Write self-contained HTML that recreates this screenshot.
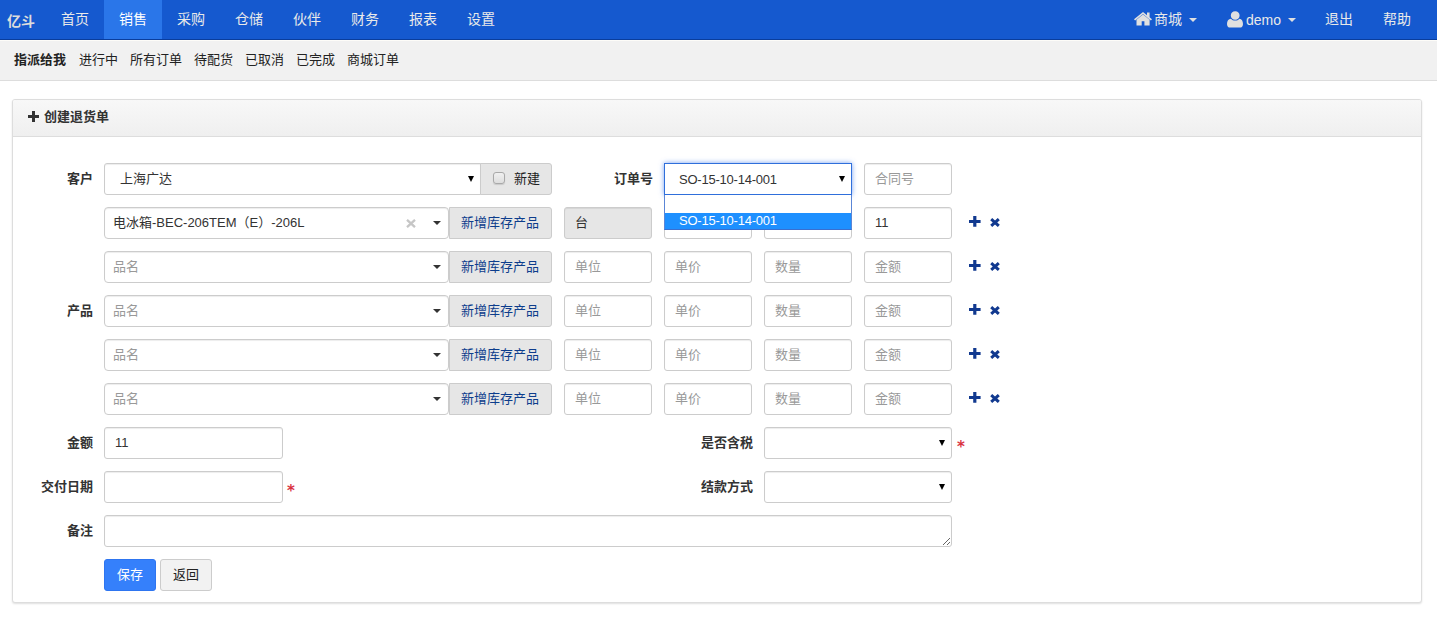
<!DOCTYPE html><html lang="zh"><head><meta charset="utf-8"><title>创建退货单</title><style>
*{box-sizing:border-box;margin:0;padding:0}
html,body{width:1437px;height:628px;overflow:hidden;background:#fff}
body{font-family:"Liberation Sans","Noto Sans CJK SC",sans-serif;font-size:13px;color:#333;position:relative;line-height:20px}
.abs{position:absolute}
.nav{position:absolute;left:0;top:0;width:1437px;height:40px;background:#1559cf;border-bottom:1px solid #0a3d9c}
.nav a{position:absolute;top:0;height:39px;line-height:38px;color:#e9e9e9;font-size:14px;text-align:center;text-decoration:none;white-space:nowrap}
.nav a.act{background:#2a76e9;color:#fff}
.brand{position:absolute;left:7px;top:0;line-height:42px;font-size:14px;font-weight:bold;color:#dcdcdc}
.caret{display:inline-block;width:0;height:0;border-top:4px solid #e0e0e0;border-left:4px solid transparent;border-right:4px solid transparent;vertical-align:middle;margin-left:4px}
.sub{position:absolute;left:0;top:40px;width:1437px;height:41px;background:#f1f1f1;border-top:1px solid #fdfcf8;border-bottom:1px solid #ddd}
.sub span{position:absolute;top:9px;line-height:20px;font-size:13px;color:#222;white-space:nowrap}
.panel{position:absolute;left:12px;top:99px;width:1410px;height:504px;border:1px solid #ddd;border-radius:3px;box-shadow:0 1px 2px rgba(0,0,0,.13);background:#fff}
.phead{position:absolute;left:0;top:0;width:100%;height:37px;background:linear-gradient(#f8f8f8,#efefef);border-bottom:1px solid #ddd;border-radius:2px 2px 0 0}
.ptitle{position:absolute;left:44px;top:107px;font-weight:bold;font-size:13px;line-height:20px;color:#333}
.lbl{position:absolute;margin:1px 0 0 1px;font-weight:bold;font-size:13px;line-height:20px;text-align:right;color:#333;white-space:nowrap}
.inp{position:absolute;height:32px;border:1px solid #ccc;border-radius:3px;background:#fff;box-shadow:inset 0 1px 1px rgba(0,0,0,.075);font-size:13px;line-height:30px;padding-left:10px;color:#333;white-space:nowrap;overflow:hidden}
.ph{color:#999}
.dis{background:#e6e6e6}
.addon{position:absolute;height:32px;border:1px solid #ccc;border-radius:0 3px 3px 0;background:#e6e6e6;font-size:13px;line-height:30px;text-align:center;color:#0d3d8c;white-space:nowrap}
.noR{border-radius:3px 0 0 3px}
.arr{position:absolute;width:0;height:0;border-top:6px solid #000;border-left:3px solid transparent;border-right:3px solid transparent}
.car2{position:absolute;width:0;height:0;border-top:4px solid #333;border-left:4px solid transparent;border-right:4px solid transparent}
.ico{position:absolute}
.star{position:absolute;color:#d9333f;font-family:'DejaVu Sans',sans-serif;font-weight:bold;font-size:15px;line-height:20px}
.btn{position:absolute;height:32px;border-radius:3px;font-size:13px;line-height:30px;text-align:center}
</style></head><body>
<div class="nav">
<span class="brand">亿斗</span>
<a class="" style="left:46px;width:58px">首页</a>
<a class="act" style="left:104px;width:58px">销售</a>
<a class="" style="left:162px;width:58px">采购</a>
<a class="" style="left:220px;width:58px">仓储</a>
<a class="" style="left:278px;width:58px">伙伴</a>
<a class="" style="left:336px;width:58px">财务</a>
<a class="" style="left:394px;width:58px">报表</a>
<a class="" style="left:452px;width:58px">设置</a>
<svg class="ico" style="left:1134px;top:12px" width="18" height="14.3" viewBox="0 0 18 15" preserveAspectRatio="none"><path fill="#e0e0e0" d="M9 0 L0 7.6 L1.1 8.9 L9 2.2 L16.9 8.9 L18 7.6 L15.6 5.6 V0.4 H13 V3.4 Z M9 2.7 L2.5 8.2 V14.2 H7.7 V9.8 H10.4 V14.2 H15.6 V8.2 Z"/></svg>
<a style="left:1154px;width:44px;text-align:left">商城<span class="caret" style="margin-left:7px"></span></a>
<svg class="ico" style="left:1227px;top:10.6px" width="16" height="17.2" viewBox="0 0 16 18" preserveAspectRatio="none"><path fill="#e0e0e0" d="M8.2 0.2 C5.6 0.2 3.8 2.2 3.8 4.7 C3.8 7.2 5.6 9.2 8.2 9.2 C10.8 9.2 12.6 7.2 12.6 4.7 C12.6 2.2 10.8 0.2 8.2 0.2 Z M3.9 8 C1.4 8.3 0 10.3 0 13.6 C0 16 1.3 17.4 3.2 17.4 H12.8 C14.7 17.4 16 16 16 13.6 C16 10.3 14.6 8.3 12.5 8 C11.4 9.3 9.9 10 8.2 10 C6.5 10 5 9.3 3.9 8 Z"/></svg>
<a style="left:1246px;width:52px;text-align:left"><span style="position:relative;top:1px">demo</span><span class="caret" style="margin-left:7px"></span></a>
<a style="left:1310px;width:58px">退出</a>
<a style="left:1368px;width:58px">帮助</a>
</div>
<div class="sub">
<span style="left:14px;font-weight:bold;">指派给我</span>
<span style="left:79px;">进行中</span>
<span style="left:130px;">所有订单</span>
<span style="left:194px;">待配货</span>
<span style="left:245px;">已取消</span>
<span style="left:296px;">已完成</span>
<span style="left:347px;">商城订单</span>
</div>
<div class="panel"><div class="phead"></div></div>
<svg class="ico" style="left:28px;top:111px" width="11" height="11" viewBox="0 0 11 11"><path fill="#333" d="M4 0H7V4H11V7H7V11H4V7H0V4H4Z"/></svg>
<div class="ptitle">创建退货单</div>
<div class="lbl" style="left:32px;width:60px;top:168px">客户</div>
<div class="inp noR" style="left:104px;top:163px;width:377px;padding-left:15px">上海广达</div>
<div class="arr" style="left:468px;top:176px"></div>
<div class="addon" style="left:480px;top:163px;width:72px;color:#222"><span class="abs" style="left:12px;top:8px;width:12px;height:12px;border:1px solid #a9a9a9;border-radius:3px;background:linear-gradient(#f0f0f0,#dedede);box-shadow:0 1px 1px rgba(0,0,0,.12)"></span><span class="abs" style="left:33px;top:0">新建</span></div>
<div class="lbl" style="left:592px;width:60px;top:168px">订单号</div>
<div class="inp" style="left:104px;top:207px;width:345px;padding-left:8px;border-radius:4px">电冰箱-BEC-206TEM（E）-206L</div>
<svg class="ico" style="left:406px;top:219px" width="10" height="9" viewBox="0 0 10 9"><path stroke="#c6c6c6" stroke-width="2.3" d="M1 0.8L9 8.2M9 0.8L1 8.2"/></svg>
<div class="car2" style="left:433px;top:221px"></div>
<div class="addon" style="left:449px;top:207px;width:103px;text-indent:-1px">新增库存产品</div>
<div class="inp dis" style="left:564px;top:207px;width:88px">台</div>
<div class="inp" style="left:664px;top:207px;width:88px"></div>
<div class="inp" style="left:764px;top:207px;width:88px"></div>
<div class="inp" style="left:864px;top:207px;width:88px">11</div>
<svg class="ico" style="left:969px;top:216px" width="12" height="11" viewBox="0 0 12 11"><path fill="#11398f" d="M4.2 0H7.4V3.9H11.6V6.9H7.4V10.8H4.2V6.9H0V3.9H4.2Z"/></svg>
<svg class="ico" style="left:990px;top:218px" width="10" height="9" viewBox="0 0 10 9"><path stroke="#11398f" stroke-width="3" d="M1.2 1.1L8.8 7.9M8.8 1.1L1.2 7.9"/></svg>
<div class="inp ph" style="left:104px;top:251px;width:345px;padding-left:8px;border-radius:4px">品名</div>
<div class="car2" style="left:433px;top:265px"></div>
<div class="addon" style="left:449px;top:251px;width:103px;text-indent:-1px">新增库存产品</div>
<div class="inp ph" style="left:564px;top:251px;width:88px">单位</div>
<div class="inp ph" style="left:664px;top:251px;width:88px">单价</div>
<div class="inp ph" style="left:764px;top:251px;width:88px">数量</div>
<div class="inp ph" style="left:864px;top:251px;width:88px">金额</div>
<svg class="ico" style="left:969px;top:260px" width="12" height="11" viewBox="0 0 12 11"><path fill="#11398f" d="M4.2 0H7.4V3.9H11.6V6.9H7.4V10.8H4.2V6.9H0V3.9H4.2Z"/></svg>
<svg class="ico" style="left:990px;top:262px" width="10" height="9" viewBox="0 0 10 9"><path stroke="#11398f" stroke-width="3" d="M1.2 1.1L8.8 7.9M8.8 1.1L1.2 7.9"/></svg>
<div class="inp ph" style="left:104px;top:295px;width:345px;padding-left:8px;border-radius:4px">品名</div>
<div class="car2" style="left:433px;top:309px"></div>
<div class="addon" style="left:449px;top:295px;width:103px;text-indent:-1px">新增库存产品</div>
<div class="inp ph" style="left:564px;top:295px;width:88px">单位</div>
<div class="inp ph" style="left:664px;top:295px;width:88px">单价</div>
<div class="inp ph" style="left:764px;top:295px;width:88px">数量</div>
<div class="inp ph" style="left:864px;top:295px;width:88px">金额</div>
<svg class="ico" style="left:969px;top:304px" width="12" height="11" viewBox="0 0 12 11"><path fill="#11398f" d="M4.2 0H7.4V3.9H11.6V6.9H7.4V10.8H4.2V6.9H0V3.9H4.2Z"/></svg>
<svg class="ico" style="left:990px;top:306px" width="10" height="9" viewBox="0 0 10 9"><path stroke="#11398f" stroke-width="3" d="M1.2 1.1L8.8 7.9M8.8 1.1L1.2 7.9"/></svg>
<div class="inp ph" style="left:104px;top:339px;width:345px;padding-left:8px;border-radius:4px">品名</div>
<div class="car2" style="left:433px;top:353px"></div>
<div class="addon" style="left:449px;top:339px;width:103px;text-indent:-1px">新增库存产品</div>
<div class="inp ph" style="left:564px;top:339px;width:88px">单位</div>
<div class="inp ph" style="left:664px;top:339px;width:88px">单价</div>
<div class="inp ph" style="left:764px;top:339px;width:88px">数量</div>
<div class="inp ph" style="left:864px;top:339px;width:88px">金额</div>
<svg class="ico" style="left:969px;top:348px" width="12" height="11" viewBox="0 0 12 11"><path fill="#11398f" d="M4.2 0H7.4V3.9H11.6V6.9H7.4V10.8H4.2V6.9H0V3.9H4.2Z"/></svg>
<svg class="ico" style="left:990px;top:350px" width="10" height="9" viewBox="0 0 10 9"><path stroke="#11398f" stroke-width="3" d="M1.2 1.1L8.8 7.9M8.8 1.1L1.2 7.9"/></svg>
<div class="inp ph" style="left:104px;top:383px;width:345px;padding-left:8px;border-radius:4px">品名</div>
<div class="car2" style="left:433px;top:397px"></div>
<div class="addon" style="left:449px;top:383px;width:103px;text-indent:-1px">新增库存产品</div>
<div class="inp ph" style="left:564px;top:383px;width:88px">单位</div>
<div class="inp ph" style="left:664px;top:383px;width:88px">单价</div>
<div class="inp ph" style="left:764px;top:383px;width:88px">数量</div>
<div class="inp ph" style="left:864px;top:383px;width:88px">金额</div>
<svg class="ico" style="left:969px;top:392px" width="12" height="11" viewBox="0 0 12 11"><path fill="#11398f" d="M4.2 0H7.4V3.9H11.6V6.9H7.4V10.8H4.2V6.9H0V3.9H4.2Z"/></svg>
<svg class="ico" style="left:990px;top:394px" width="10" height="9" viewBox="0 0 10 9"><path stroke="#11398f" stroke-width="3" d="M1.2 1.1L8.8 7.9M8.8 1.1L1.2 7.9"/></svg>
<div class="lbl" style="left:32px;width:60px;top:300px">产品</div>
<div class="inp" style="left:664px;top:163px;width:188px;border:1px solid #2f6fdb;border-radius:0;box-shadow:0 0 5px rgba(60,120,235,.7);padding-left:14px;line-height:31px;letter-spacing:-0.22px;overflow:visible">SO-15-10-14-001</div>
<div class="arr" style="left:839px;top:176px"></div>
<div class="inp ph" style="left:864px;top:163px;width:88px">合同号</div>
<div class="abs" style="left:664px;top:195px;width:188px;height:35px;border:1px solid #5b86d6;border-top:none;border-bottom-color:#3a6fd0;background:#fff"></div>
<div class="abs" style="left:665px;top:213px;width:186px;height:16px;background:#1e90ff;color:#fff;font-size:13px;line-height:15px;padding-left:14px;letter-spacing:-0.22px">SO-15-10-14-001</div>
<div class="lbl" style="left:32px;width:60px;top:432px">金额</div>
<div class="inp" style="left:104px;top:427px;width:179px">11</div>
<div class="lbl" style="left:672px;width:80px;top:432px">是否含税</div>
<div class="inp" style="left:764px;top:427px;width:188px"></div>
<div class="arr" style="left:939px;top:440px"></div>
<div class="star" style="left:957px;top:437px">*</div>
<div class="lbl" style="left:12px;width:80px;top:476px">交付日期</div>
<div class="inp" style="left:104px;top:471px;width:179px"></div>
<div class="star" style="left:287px;top:481px">*</div>
<div class="lbl" style="left:672px;width:80px;top:476px">结款方式</div>
<div class="inp" style="left:764px;top:471px;width:188px"></div>
<div class="arr" style="left:939px;top:484px"></div>
<div class="lbl" style="left:32px;width:60px;top:520px">备注</div>
<div class="inp" style="left:104px;top:515px;width:848px"></div>
<svg class="ico" style="left:943px;top:538px" width="7" height="7" viewBox="0 0 7 7"><path stroke="#666" stroke-width="1" d="M0 7L7 0M4 7L7 4"/></svg>
<div class="btn" style="left:104px;top:559px;width:52px;background:#3580fb;border:1px solid #2e75f0;color:#fff">保存</div>
<div class="btn" style="left:160px;top:559px;width:52px;background:#f2f2f2;border:1px solid #ccc;color:#222">返回</div>
</body></html>
